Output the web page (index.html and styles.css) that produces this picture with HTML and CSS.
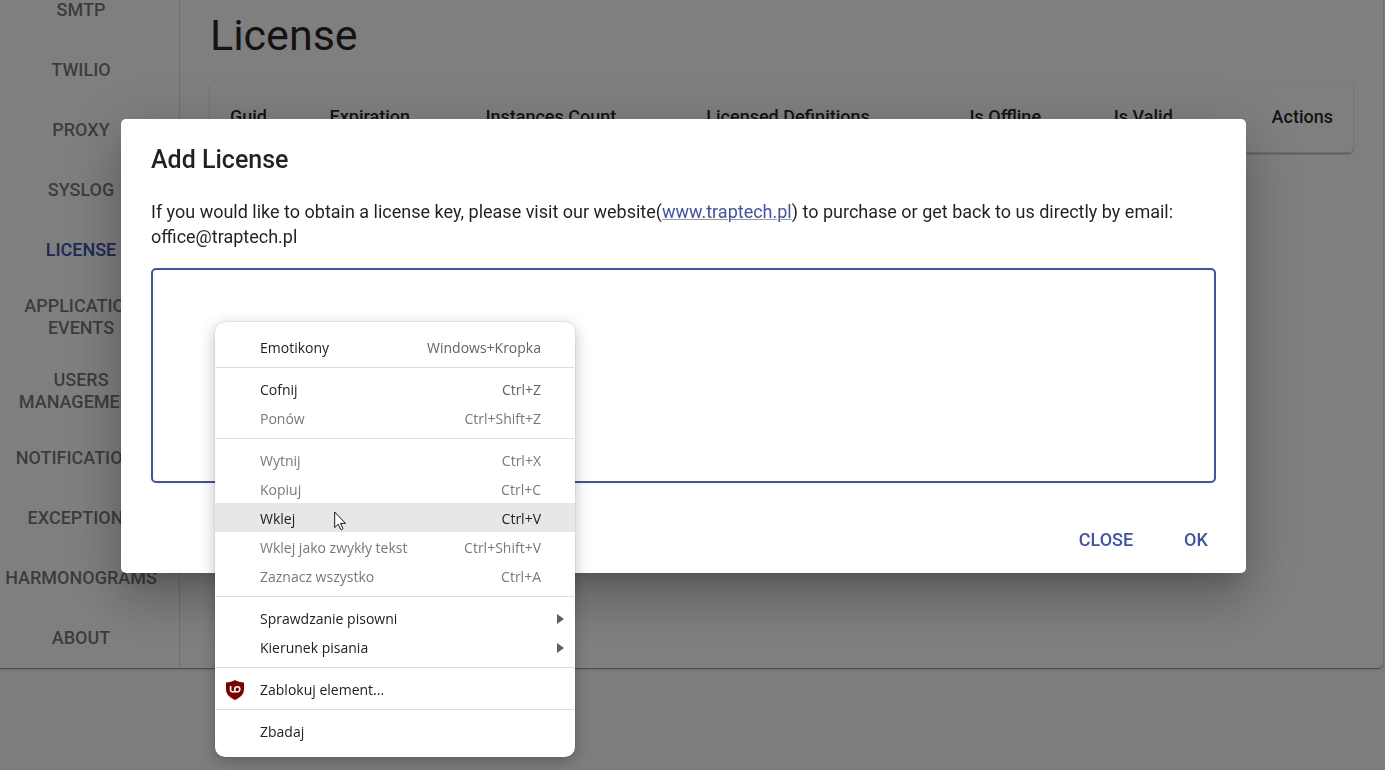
FILE: index.html
```html
<!DOCTYPE html>
<html lang="en">
<head>
<meta charset="utf-8">
<title>License</title>
<link rel="stylesheet" href="styles.css">
</head>
<body>
<div class="page">
  <div class="card">
    <nav class="tabs">
      <button class="tab">SMTP</button>
      <button class="tab">Twilio</button>
      <button class="tab">Proxy</button>
      <button class="tab">Syslog</button>
      <button class="tab tab-active">License</button>
      <button class="tab">Application Events</button>
      <button class="tab">Users Management</button>
      <button class="tab">Notifications</button>
      <button class="tab">Exceptions</button>
      <button class="tab">Harmonograms</button>
      <button class="tab">About</button>
    </nav>
    <main class="content">
      <h1 class="heading">License</h1>
      <div class="table-card">
        <table class="table">
          <thead>
            <tr><th>Guid</th><th>Expiration</th><th>Instances Count</th><th>Licensed Definitions</th><th>Is Offline</th><th>Is Valid</th><th class="cell-end">Actions</th></tr>
          </thead>
        </table>
      </div>
    </main>
  </div>
</div>

<div class="overlay">
  <div class="dialog" role="dialog" aria-labelledby="dialog-title">
    <h2 class="dialog-title" id="dialog-title">Add License</h2>
    <div class="dialog-body">
      <p class="dialog-text">If you would like to obtain a license key, please visit our website(<a class="link" href="#">www.traptech.pl</a>) to purchase or get back to us directly by email: office@traptech.pl</p>
      <textarea class="key-input" aria-label="License key"></textarea>
    </div>
    <div class="dialog-actions">
      <button class="action">Close</button>
      <button class="action">OK</button>
    </div>
  </div>
</div>

<div class="menu" role="menu">
  <button class="item" role="menuitem"><span>Emotikony</span><span class="key">Windows+Kropka</span></button>
  <hr class="divider">
  <button class="item" role="menuitem"><span>Cofnij</span><span class="key">Ctrl+Z</span></button>
  <button class="item" role="menuitem" disabled><span>Ponów</span><span class="key">Ctrl+Shift+Z</span></button>
  <hr class="divider">
  <button class="item" role="menuitem" disabled><span>Wytnij</span><span class="key">Ctrl+X</span></button>
  <button class="item" role="menuitem" disabled><span>Kopiuj</span><span class="key">Ctrl+C</span></button>
  <button class="item item-hover" role="menuitem"><span>Wklej</span><span class="key">Ctrl+V</span></button>
  <button class="item" role="menuitem" disabled><span>Wklej jako zwykły tekst</span><span class="key">Ctrl+Shift+V</span></button>
  <button class="item" role="menuitem" disabled><span>Zaznacz wszystko</span><span class="key">Ctrl+A</span></button>
  <hr class="divider">
  <button class="item item-sub" role="menuitem"><span>Sprawdzanie pisowni</span><svg width="8" height="10" viewBox="0 0 8 10"><path d="M0 0l7 5-7 5z" fill="#5f6063"/></svg></button>
  <button class="item item-sub" role="menuitem"><span>Kierunek pisania</span><svg width="8" height="10" viewBox="0 0 8 10"><path d="M0 0l7 5-7 5z" fill="#5f6063"/></svg></button>
  <hr class="divider">
  <button class="item item-icon" role="menuitem"><svg width="20" height="20" viewBox="0 0 20 20"><path d="M10 0C7.600 1.500 4.500 2.500 1 2.500V9c0 5.500 3.800 8.500 9 11 5.200-2.500 9-5.500 9-11V2.500C15.500 2.500 12.400 1.500 10 0z" fill="#800000"/><path d="M5.600 6v4.200c0 1 .6 1.600 1.600 1.600h5.100a2.500 2.500 0 0 0 0-5c-1.500 0-2.500 1-2.500 2.500v2.500" fill="none" stroke="#fff" stroke-width="1.600"/></svg><span>Zablokuj element...</span></button>
  <hr class="divider">
  <button class="item" role="menuitem"><span>Zbadaj</span></button>
</div>

<svg class="cursor" width="13" height="20" viewBox="0 0 13 20"><path d="M.7 1v15.600l3.500-3.400 2.500 5.300c.3.500 2.500-.4 2.200-1l-2.400-5.100h5z" fill="#fff" stroke="#15151f" stroke-width="1"/></svg>
</body>
</html>
```
FILE: styles.css
```css
* {
  box-sizing: border-box;
}

body {
  margin: 0;
  height: 100vh;
  overflow: hidden;
  background: #fafafa;
  color: rgba(0, 0, 0, 0.87);
  font-family: Roboto, sans-serif;
}

button {
  border: 0;
  background: none;
  font-family: inherit;
}

.page {
  margin-top: -20px;
  padding-right: 2px;
}

.card {
  display: flex;
  background: #fff;
  border-radius: 0 5px 5px 0;
  box-shadow: 0 1px 3px rgba(0, 0, 0, 0.2), 0 1px 1px rgba(0, 0, 0, 0.3);
}

.tabs {
  display: flex;
  flex-direction: column;
  width: 180px;
  padding-right: 17px;
  border-right: 1px solid #e0e0e0;
}

.tab {
  min-height: 60px;
  padding: 15px 0;
  color: rgba(0, 0, 0, 0.54);
  font-size: 18px;
  font-weight: 500;
  line-height: 22px;
  text-transform: uppercase;
}

.tab-active {
  color: #3f51b5;
}

.content {
  flex: 1;
  padding: 30px;
}

.heading {
  margin: 0 0 22px;
  font-size: 43px;
  font-weight: 400;
  line-height: 50px;
}

.table-card {
  background: #fff;
  border-radius: 5px;
  box-shadow: 0 1px 3px rgba(0, 0, 0, 0.2), 0 1px 1px rgba(0, 0, 0, 0.2);
}

.table {
  width: 100%;
  border-collapse: collapse;
}

.table th {
  padding: 20px;
  border-bottom: 1px solid #e0e0e0;
  font-size: 18px;
  font-weight: 500;
  line-height: 30px;
  text-align: left;
  white-space: nowrap;
}

.table .cell-end {
  text-align: right;
}

.overlay {
  position: fixed;
  inset: 0;
  display: flex;
  justify-content: center;
  align-items: flex-start;
  padding: 119px 18px 0 0;
  background: rgba(0, 0, 0, 0.5);
}

.dialog {
  width: 100%;
  max-width: 1125px;
  background: #fff;
  border-radius: 5px;
  box-shadow: 0 14px 19px -9px rgba(0, 0, 0, 0.2), 0 30px 48px 4px rgba(0, 0, 0, 0.14), 0 11px 58px 10px rgba(0, 0, 0, 0.12);
}

.dialog-title {
  margin: 0;
  padding: 20px 30px 18px;
  font-size: 25px;
  font-weight: 500;
  line-height: 42px;
}

.dialog-body {
  display: flex;
  flex-direction: column;
  gap: 19px;
  padding: 0 30px 24px;
}

.dialog-text {
  margin: 0;
  font-size: 18px;
  line-height: 25px;
}

.link {
  color: #3f51b5;
  text-decoration-color: rgba(63, 81, 181, 0.6);
  text-decoration-thickness: 1px;
}

.key-input {
  display: block;
  width: 100%;
  height: 215px;
  padding: 20px;
  border: 2px solid #3f51b5;
  border-radius: 5px;
  background: #fff;
  outline: 0;
  resize: none;
}

.dialog-actions {
  display: flex;
  justify-content: flex-end;
  gap: 10px;
  padding: 10px;
}

.action {
  min-width: 80px;
  height: 46px;
  padding: 0 10px 2px;
  color: #3f51b5;
  font-size: 18px;
  font-weight: 500;
  text-transform: uppercase;
}

.menu {
  position: fixed;
  top: 322px;
  left: 215px;
  width: 360px;
  padding: 10px 0 12px;
  border-radius: 10px;
  background: #fff;
  box-shadow: 0 4px 16px rgba(0, 0, 0, 0.25), 0 0 2px rgba(0, 0, 0, 0.15);
  font-family: "Open Sans", "Noto Sans", sans-serif;
}

.item {
  display: flex;
  align-items: center;
  justify-content: space-between;
  width: 100%;
  height: 29px;
  padding: 2px 34px 0 45px;
  color: #202124;
  font-size: 14px;
  line-height: 27px;
}

.key {
  color: #5f6368;
}

.item:disabled,
.item:disabled .key {
  color: #75797e;
}

.item-hover {
  background: #e7e7e7;
}

.item-hover .key {
  color: #202124;
}

.item-sub {
  padding-right: 10px;
}

.item-icon {
  justify-content: flex-start;
  gap: 15px;
  padding-left: 10px;
}

.divider {
  height: 1px;
  margin: 6px 1px;
  border: 0;
  background: #dadce0;
}

.cursor {
  position: fixed;
  top: 511px;
  left: 334px;
}
```
